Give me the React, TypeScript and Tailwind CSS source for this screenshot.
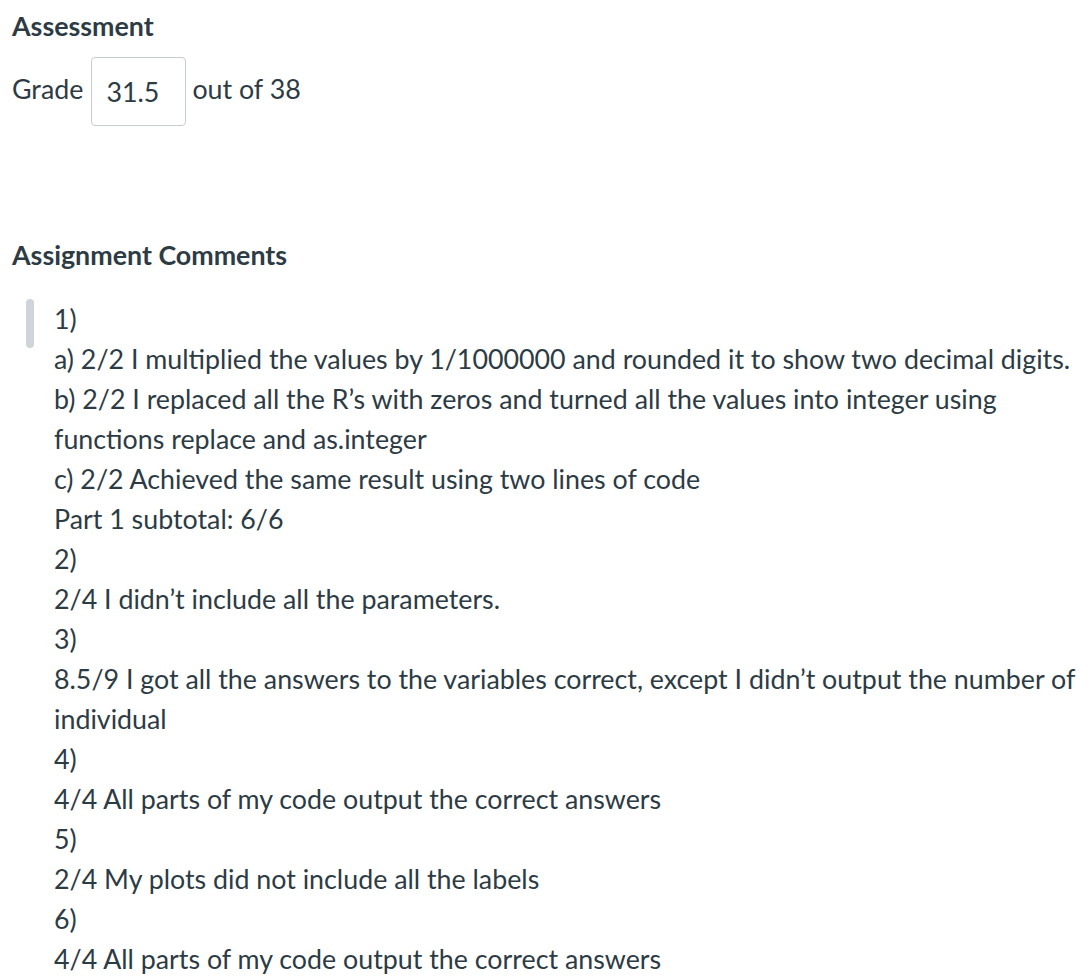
import React from 'react';

const lines = [
  '1)',
  'a) 2/2 I multiplied the values by 1/1000000 and rounded it to show two decimal digits.',
  'b) 2/2 I replaced all the R’s with zeros and turned all the values into integer using functions replace and as.integer',
  'c) 2/2 Achieved the same result using two lines of code',
  'Part 1 subtotal: 6/6',
  '2)',
  '2/4 I didn’t include all the parameters.',
  '3)',
  '8.5/9 I got all the answers to the variables correct, except I didn’t output the number of individual',
  '4)',
  '4/4 All parts of my code output the correct answers',
  '5)',
  '2/4 My plots did not include all the labels',
  '6)',
  '4/4 All parts of my code output the correct answers',
];

export default function App() {
  return (
    <div className="min-h-[980px] bg-white text-[#2d3b45] font-['Lato','Liberation_Sans',sans-serif] overflow-hidden">
      <div className="pl-3 pt-[6px]">
        <h2 className="text-[26.8px] font-bold leading-[40px]">Assessment</h2>
        <div className="mt-[11px] flex items-start">
          <span className="text-[26.8px] leading-[40px] pt-[12px]">Grade</span>
          <div className="ml-[8px] w-[95px] h-[69px] border border-[#c7cdd1] rounded-[4px] pl-[14px] pt-[14px] text-[26.8px] leading-[40px]">
            31.5
          </div>
          <span className="ml-[6px] text-[26.8px] leading-[40px] pt-[12px]">out of 38</span>
        </div>
        <h2 className="mt-[109px] text-[26.8px] font-bold leading-[40px]">Assignment Comments</h2>
        <div className="mt-[24px] flex">
          <div className="ml-[14px] w-[8px] h-[49px] rounded-full bg-[#d0d4d8] shrink-0" />
          <div className="ml-[20px] pr-3 text-[26.8px] leading-[40px]">
            {lines.map((l, i) => (
              <div key={i}>{l}</div>
            ))}
          </div>
        </div>
      </div>
    </div>
  );
}
